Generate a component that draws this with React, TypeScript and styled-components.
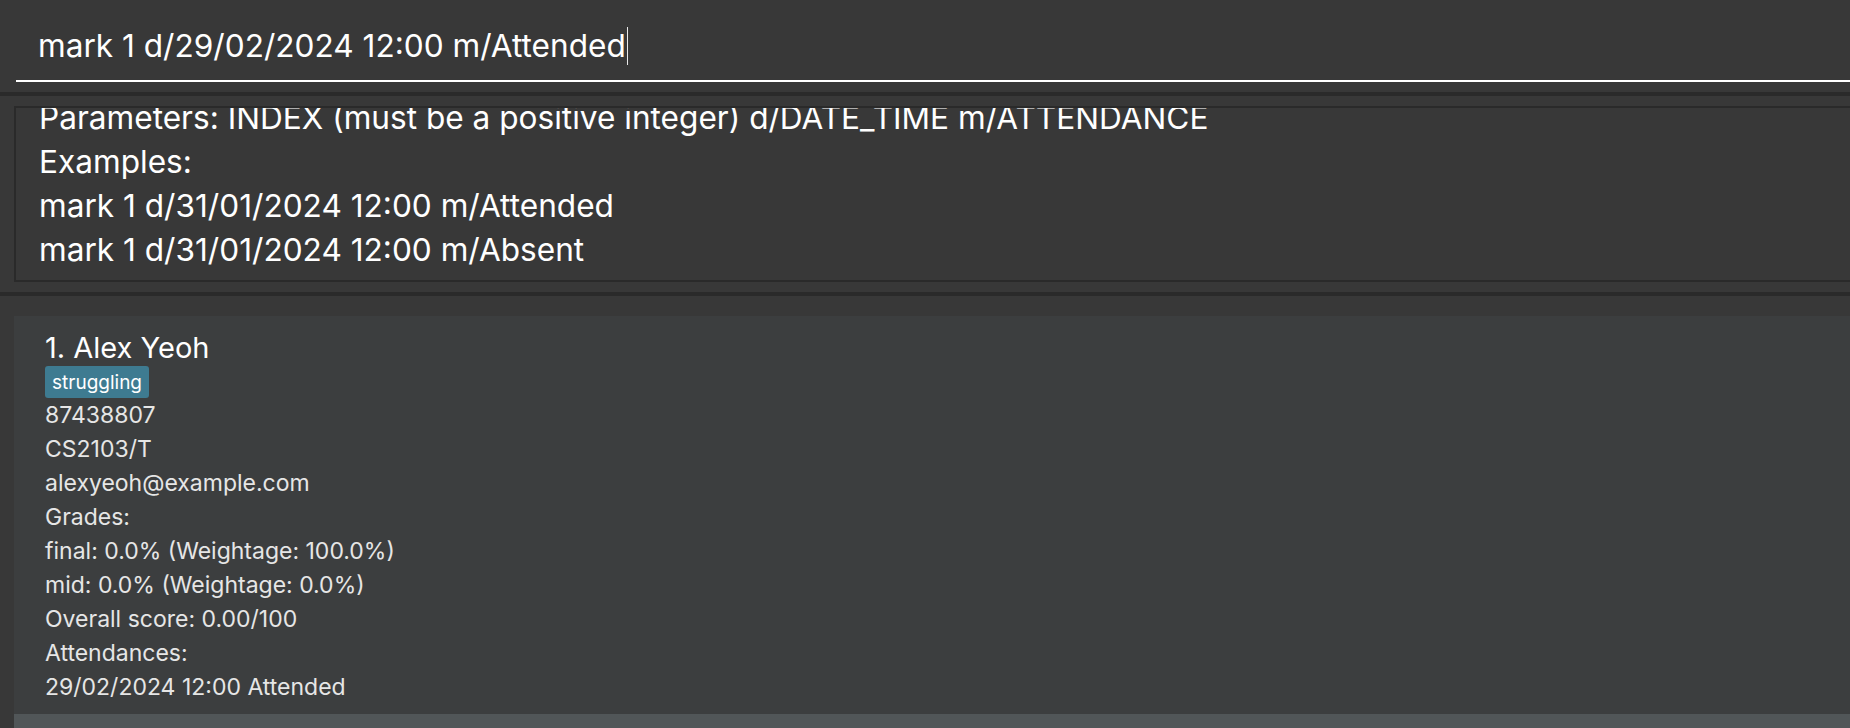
import React from 'react'
import styled, { createGlobalStyle } from 'styled-components'

const GlobalStyle = createGlobalStyle`
	html, body {
		margin: 0;
		padding: 0;
		background: #383838;
	}
	body {
		font-family: Inter, "Noto Sans", sans-serif;
		color: #ffffff;
	}
`

const Window = styled('div')`
	display: flex;
	flex-direction: column;
	width: 100vw;
	height: 100vh;
	overflow: hidden;
	background: #383838;
`

const Divider = styled('div')`
	flex: none;
	height: 4px;
	background: #2a2a2a;
`

const CommandSection = styled('div')`
	flex: none;
	height: 92px;
	padding-left: 16px;
	box-sizing: border-box;
`

const CommandField = styled('div')`
	display: flex;
	align-items: center;
	height: 82px;
	padding-left: 22px;
	padding-top: 11px;
	box-sizing: border-box;
	border-bottom: 2px solid #ffffff;
	font-size: 31.6px;
	white-space: nowrap;
`

const Caret = styled('span')`
	display: inline-block;
	width: 0;
	height: 38px;
	margin-left: 1px;
	border-left: 1.5px solid #e8e8e8;
`

const ResultSection = styled('div')`
	flex: none;
	height: 196px;
	padding: 10px 0 10px 14px;
	box-sizing: border-box;
`

const ResultBox = styled('div')`
	height: 100%;
	box-sizing: border-box;
	border: 2px solid #2a2a2a;
	border-right: none;
	padding-left: 23px;
	overflow: hidden;
`

const ResultText = styled('div')`
	margin-top: -12px;
	font-size: 31.6px;
	line-height: 44px;
	white-space: pre;
`

const ListSection = styled('div')`
	flex: 1;
	display: flex;
	flex-direction: column;
	padding: 20px 0 0 14px;
	min-height: 0;
`

const PersonCard = styled('div')<{ $odd?: boolean }>`
	flex: none;
	display: flex;
	flex-direction: column;
	align-items: flex-start;
	padding: 15px 0 10px 31px;
	background: ${(p) => (p.$odd ? '#515658' : '#3c3e3f')};
`

const EmptyCard = styled(PersonCard)`
	flex: 1;
	padding: 0;
`

const Name = styled('div')`
	font-size: 29px;
	line-height: 34px;
	color: #ffffff;
`

const Tag = styled('span')`
	display: inline-flex;
	align-items: center;
	height: 32px;
	margin-top: 1px;
	padding: 0 7px;
	border-radius: 3px;
	background: #3e7b91;
	font-size: 19px;
	color: #ffffff;
`

const Detail = styled('div')`
	font-size: 23px;
	line-height: 34px;
	color: #e6e6e6;
	white-space: nowrap;
`

const resultLines = [
	'Parameters: INDEX (must be a positive integer) d/DATE_TIME m/ATTENDANCE',
	'Examples:',
	'mark 1 d/31/01/2024 12:00 m/Attended',
	'mark 1 d/31/01/2024 12:00 m/Absent',
]

const details = [
	'87438807',
	'CS2103/T',
	'alexyeoh@example.com',
	'Grades:',
	'final: 0.0% (Weightage: 100.0%)',
	'mid: 0.0% (Weightage: 0.0%)',
	'Overall score: 0.00/100',
	'Attendances:',
	'29/02/2024 12:00 Attended',
]

export default function App() {
	return (
		<>
			<GlobalStyle />
			<Window>
				<CommandSection>
					<CommandField>
						mark 1 d/29/02/2024 12:00 m/Attended
						<Caret />
					</CommandField>
				</CommandSection>
				<Divider />
				<ResultSection>
					<ResultBox>
						<ResultText>{resultLines.join('\n')}</ResultText>
					</ResultBox>
				</ResultSection>
				<Divider />
				<ListSection>
					<PersonCard>
						<Name>1. Alex Yeoh</Name>
						<Tag>struggling</Tag>
						{details.map((line) => (
							<Detail key={line}>{line}</Detail>
						))}
					</PersonCard>
					<EmptyCard $odd />
				</ListSection>
			</Window>
		</>
	)
}
